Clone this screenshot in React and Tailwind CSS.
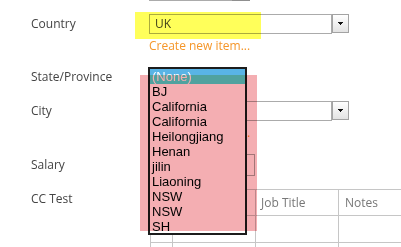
import React from 'react';

const labelCls = "w-[149px] shrink-0 pl-[31px] text-[12px] leading-[18px] text-[#444]";

const states = ['BJ', 'California', 'California', 'Heilongjiang', 'Henan', 'jilin', 'Liaoning', 'NSW', 'NSW', 'SH'];

const Arrow = () => (
  <svg width="5" height="3" viewBox="0 0 5 3" shapeRendering="crispEdges">
    <rect x="0" y="0" width="5" height="1" fill="#111" />
    <rect x="1" y="1" width="3" height="1" fill="#111" />
    <rect x="2" y="2" width="1" height="1" fill="#111" />
  </svg>
);

const DropButton = ({ className = '' }) => (
  <div className={`flex w-[17px] shrink-0 items-center justify-center border border-[#a3a3a3] bg-gradient-to-b from-white to-[#e3e3e3] ${className}`}>
    <Arrow />
  </div>
);

const Select = ({ value }) => (
  <div className="flex h-[20px] items-start">
    <div className="flex h-[20px] w-[183px] items-center border border-[#ababab] bg-white pl-[5px] text-[12px] text-[#444]">
      {value}
    </div>
    <DropButton className="h-[19px]" />
  </div>
);

const CreateLink = () => (
  <div className="mt-[3px] pl-[149px] text-[12px] leading-[18px] text-[#f5962a]">Create new item...</div>
);

export default function App() {
  return (
    <div className="relative isolate h-[247px] w-[401px] overflow-hidden bg-white font-['Open_Sans',sans-serif]">
      <div className="flex flex-col">
        {/* field above, scrolled out of view */}
        <div className="-mt-[19px] flex h-[20px] pl-[149px]">
          <div className="h-[20px] w-[83px] border border-[#ababab]" />
          <div className="h-[20px] w-[18px] border border-[#8f8f8f] bg-[#e8e8e8]" />
        </div>

        <div className="mt-[13px] flex h-[20px] items-center">
          <div className={labelCls}>Country</div>
          <Select value="UK" />
        </div>
        <CreateLink />

        <div className="mt-[12px] flex h-[20px] items-center">
          <div className={labelCls}>State/Province</div>
        </div>

        <div className="mt-[14px] flex h-[20px] items-center">
          <div className={labelCls}>City</div>
          <Select value="" />
        </div>
        <CreateLink />

        <div className="mt-[12px] flex h-[22px] items-center">
          <div className={labelCls}>Salary</div>
          <div className="h-[22px] w-[106px] border border-[#ababab]" />
        </div>

        <div className="mt-[13px] flex items-start">
          <div className={`${labelCls} pt-[1px]`}>CC Test</div>
          <div className="ml-[1px] grid flex-1 grid-cols-[22px_83px_83px_1fr] text-[12px] text-[#777]">
            <div className="h-[26px] border-l border-t border-[#c6c6c6]" />
            <div className="h-[26px] border-l border-t border-[#c6c6c6]" />
            <div className="flex h-[26px] items-center border-l border-t border-[#c6c6c6] pl-[5px]">Job Title</div>
            <div className="flex h-[26px] items-center border-l border-t border-[#c6c6c6] pl-[6px]">Notes</div>
            <div className="h-[27px] border-l border-t border-[#c6c6c6]" />
            <div className="h-[27px] border-l border-t border-[#c6c6c6]" />
            <div className="h-[27px] border-l border-t border-[#c6c6c6]" />
            <div className="h-[27px] border-l border-t border-[#c6c6c6]" />
            <div className="h-[27px] border-l border-t border-[#c6c6c6]" />
            <div className="h-[27px] border-l border-t border-[#c6c6c6]" />
            <div className="h-[27px] border-l border-t border-[#c6c6c6]" />
            <div className="h-[27px] border-l border-t border-[#c6c6c6]" />
          </div>
        </div>
      </div>

      {/* open State/Province list */}
      <div className="absolute left-[148px] top-[67px] h-[168px] w-[99px] overflow-hidden border-2 border-[#1c1c1c] bg-white font-['Liberation_Sans',Arial,sans-serif] text-[13px] leading-[15px] text-black">
        <div className="h-[15px] bg-[linear-gradient(to_bottom,#59b4e6_6px,#53eee4_6px)] pl-[2px] text-white">(None)</div>
        {states.map((s, i) => (
          <div key={i} className="h-[15px] pl-[2px]">{s}</div>
        ))}
      </div>

      {/* highlighter marks */}
      <div className="absolute left-[135px] top-[12px] h-[27px] w-[126px] bg-[#ffff5a] mix-blend-multiply" />
      <div className="absolute left-[140px] top-[75px] h-[156px] w-[117px] bg-[#f4aeb2] mix-blend-multiply" />
    </div>
  );
}
